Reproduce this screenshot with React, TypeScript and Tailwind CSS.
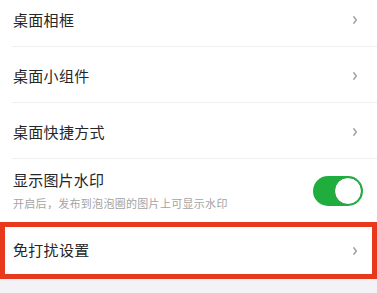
import React from 'react';

const FONT = { fontFamily: '"Noto Sans CJK SC", "Noto Sans", sans-serif' };

const Chevron = () => (
  <svg width="6" height="10" viewBox="0 0 6 10" className="shrink-0">
    <path d="M1.8 1.8 L4.3 5 L1.8 8.2" fill="none" stroke="#9d9da2" strokeWidth="1.4" strokeLinecap="round" strokeLinejoin="round" />
  </svg>
);

const LinkRow = ({ label }: { label: string }) => (
  <div className="h-14 flex items-center justify-between pl-[13px] pr-[19px] relative">
    <span className="text-[15px] text-[#262626] tracking-[0.3px]">{label}</span>
    <Chevron />
    <div className="absolute left-3 right-0 bottom-[1px] h-px bg-[#f0f0f2]" />
  </div>
);

export default function App() {
  return (
    <div className="w-[377px] h-[293px] overflow-hidden bg-[#f3f3f7]" style={FONT}>
      <div className="bg-white -mt-2">
        <LinkRow label="桌面相框" />
        <LinkRow label="桌面小组件" />
        <LinkRow label="桌面快捷方式" />
        <div className="h-[62px] flex items-center justify-between pl-[13px] pr-[14px]">
          <div className="flex flex-col -mt-[3px]">
            <span className="text-[15px] leading-[22px] text-[#262626] tracking-[0.2px]">显示图片水印</span>
            <span className="text-[11px] leading-[16px] text-[#a3a3a3] tracking-[0.3px] mt-[4px]">
              开启后，发布到泡泡圈的图片上可显示水印
            </span>
          </div>
          <div className="w-[50px] h-[30px] rounded-full bg-[#1fae3e] flex items-center justify-end pr-[1px]">
            <div className="w-[28px] h-[28px] rounded-full bg-white border border-[#1a9a36]" />
          </div>
        </div>
      </div>
      <div className="bg-white w-[377px] h-[57px] border-[5px] border-[#e8391d] flex items-center justify-between pl-[8px] pr-[14px]">
        <span className="text-[15px] text-[#262626] tracking-[0.3px]">免打扰设置</span>
        <Chevron />
      </div>
    </div>
  );
}
